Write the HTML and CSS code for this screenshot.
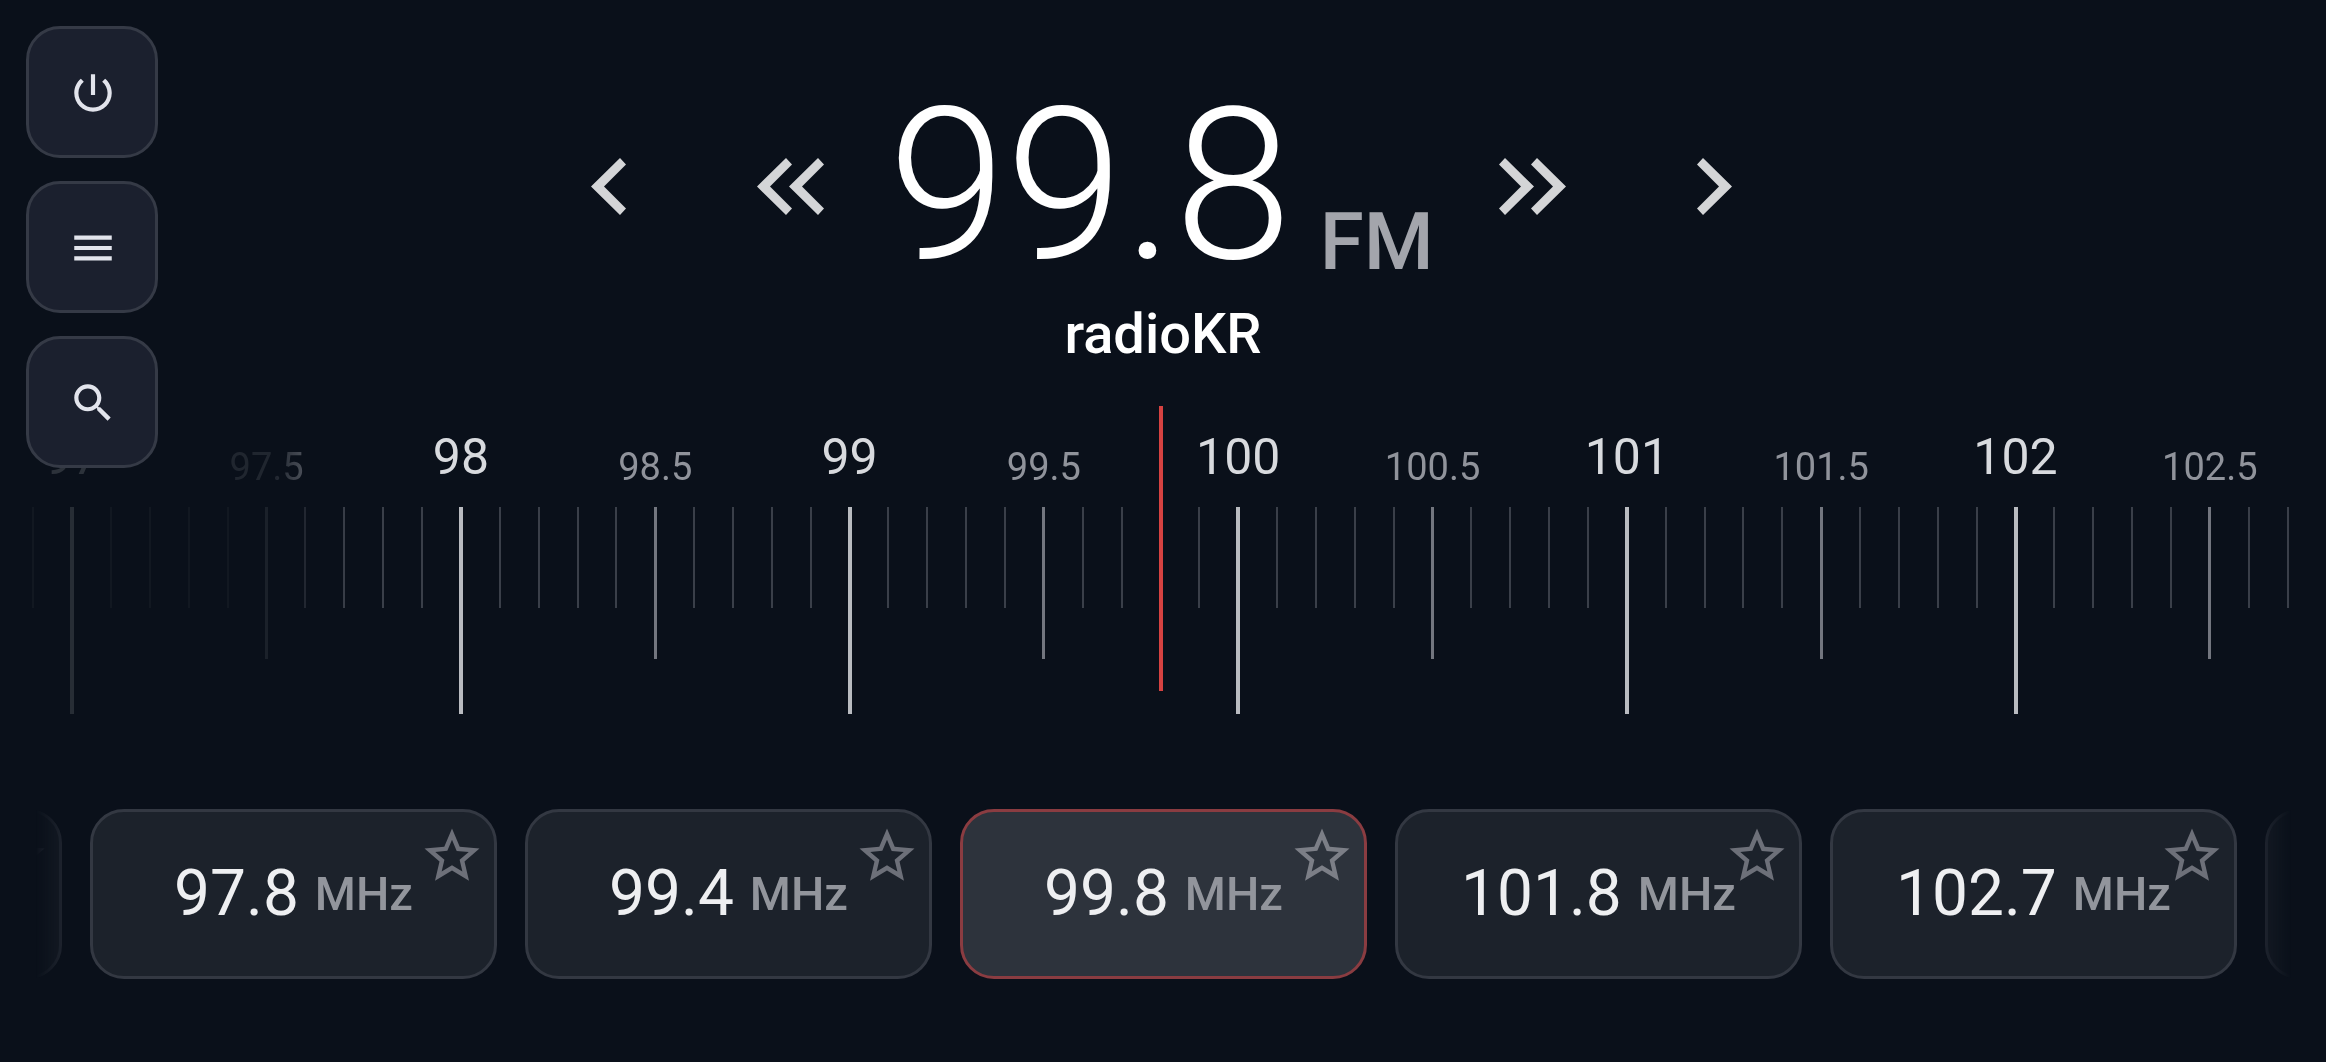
FILE: index.html
```html
<!DOCTYPE html>
<html lang="en">
<head>
<meta charset="utf-8">
<meta name="viewport" content="width=device-width, initial-scale=1">
<title>FM Radio</title>
<link rel="stylesheet" href="styles.css">
</head>
<body>
<nav class="side-nav" aria-label="Radio controls">
  <button class="side-button" type="button" aria-label="Power">
    <svg class="side-icon" viewBox="0 0 24 24"><path d="M13 3h-2v10h2V3zm4.83 2.17-1.42 1.42C17.99 7.86 19 9.81 19 12c0 3.87-3.13 7-7 7s-7-3.13-7-7c0-2.19 1.01-4.14 2.58-5.42L6.17 5.17C4.23 6.82 3 9.26 3 12c0 4.97 4.03 9 9 9s9-4.03 9-9c0-2.74-1.23-5.18-3.17-6.83z"/></svg>
  </button>
  <button class="side-button" type="button" aria-label="Menu">
    <svg class="side-icon" viewBox="0 0 24 24"><path d="M3 18h18v-2H3v2zm0-5h18v-2H3v2zm0-7v2h18V6H3z"/></svg>
  </button>
  <button class="side-button" type="button" aria-label="Search">
    <svg class="side-icon" viewBox="0 0 24 24"><path d="M15.5 14h-.79l-.28-.27C15.41 12.59 16 11.11 16 9.5 16 5.91 13.09 3 9.5 3S3 5.91 3 9.5 5.91 16 9.5 16c1.61 0 3.09-.59 4.23-1.57l.27.28v.79l5 4.99L20.49 19l-4.99-5zm-6 0C7.01 14 5 11.99 5 9.5S7.01 5 9.5 5 14 7.01 14 9.5 11.99 14 9.5 14z"/></svg>
  </button>
</nav>

<main class="radio">
  <section class="tuner" aria-label="Tuner">
    <button class="step" type="button" aria-label="Step down">
      <svg width="35" height="57" viewBox="0 0 35 57"><path d="M29 0l6 6.5-22 22 22 22-6 6.500L0 28.500z"/></svg>
    </button>
    <button class="step" type="button" aria-label="Seek down">
      <svg width="67" height="57" viewBox="0 0 67 57"><path d="M29 0l6 6.500-22 22 22 22-6 6.500L0 28.500zM61 0l6 6.500-22 22 22 22-6 6.500L32 28.500z"/></svg>
    </button>
    <p class="readout"><span class="frequency">99.8</span><span class="band">FM</span></p>
    <button class="step" type="button" aria-label="Seek up">
      <svg width="67" height="57" viewBox="0 0 67 57"><path d="M6 0L0 6.500l22 22-22 22L6 57l29-28.500zM38 0l-6 6.500 22 22-22 22 6 6.500 29-28.500z"/></svg>
    </button>
    <button class="step" type="button" aria-label="Step up">
      <svg width="35" height="57" viewBox="0 0 35 57"><path d="M6 0L0 6.500l22 22-22 22L6 57l29-28.500z"/></svg>
    </button>
  </section>
  <p class="station-name">radioKR</p>

  <section class="dial" aria-label="Frequency dial">
    <ol class="ticks" id="ticks"></ol>
    <input class="needle" type="range" min="96.85" max="102.75" step="0.05" value="99.8" aria-label="Frequency in MHz">
  </section>

  <ul class="presets" aria-label="Presets" id="presets">
    <li class="preset"></li>
    <li class="preset"><button class="preset-button" type="button"><span class="preset-value">97.8</span><span class="preset-unit">MHz</span></button></li>
    <li class="preset"><button class="preset-button" type="button"><span class="preset-value">99.4</span><span class="preset-unit">MHz</span></button></li>
    <li class="preset preset-active"><button class="preset-button" type="button" aria-current="true"><span class="preset-value">99.8</span><span class="preset-unit">MHz</span></button></li>
    <li class="preset"><button class="preset-button" type="button"><span class="preset-value">101.8</span><span class="preset-unit">MHz</span></button></li>
    <li class="preset"><button class="preset-button" type="button"><span class="preset-value">102.7</span><span class="preset-unit">MHz</span></button></li>
    <li class="preset"></li>
  </ul>
</main>
<script src="radio.js"></script>
</body>
</html>
```

FILE: styles.css
```css
* {
  box-sizing: border-box;
}

body {
  margin: 0;
  background: #0a101a;
  color: #fff;
  font-family: Roboto, "Noto Sans", sans-serif;
}

button {
  margin: 0;
  padding: 0;
  border: 0;
  background: none;
  color: inherit;
  font: inherit;
  cursor: pointer;
}

p,
ol,
ul {
  margin: 0;
  padding: 0;
  list-style: none;
}

svg {
  display: block;
  fill: currentColor;
}

/* Floating buttons over the left end of the dial */
.side-nav {
  position: absolute;
  top: 26px;
  left: 26px;
  z-index: 2;
  display: flex;
  flex-direction: column;
  gap: 23px;
}

.side-button {
  display: grid;
  place-items: center;
  width: 132px;
  height: 132px;
  padding: 2px 0 0 2px;
  border: 3px solid #353a46;
  border-radius: 34px;
  background: #1b202e;
  color: #e2e4ec;
}

.side-icon {
  width: 50px;
  height: 50px;
}

.radio {
  padding-top: 78px;
  overflow: hidden;
}

.tuner {
  display: flex;
  align-items: center;
  justify-content: center;
  padding-right: 4px;
}

.step {
  display: grid;
  place-items: center;
  width: 182px;
  height: 120px;
  color: #d4d5d7;
}

.readout {
  display: flex;
  align-items: flex-end;
  justify-content: center;
  gap: 28px;
  min-width: 560px;
}

.frequency {
  font-size: 212px;
  font-weight: 300;
  line-height: 216px;
}

.band {
  margin-bottom: 12px;
  color: #a3a5ac;
  font-size: 80px;
  font-weight: 500;
  line-height: 80px;
}

.station-name {
  margin-top: 8px;
  font-size: 56px;
  font-weight: 500;
  line-height: 64px;
  text-align: center;
}

/* Dial */
.dial {
  position: relative;
  margin: 40px 19px 0 14px;
}

.ticks {
  display: grid;
  grid-auto-flow: column;
  grid-auto-columns: 1fr;
  height: 308px;
  -webkit-mask-image: linear-gradient(to right, rgba(0, 0, 0, 0.17) 262px, #000 334px);
  mask-image: linear-gradient(to right, rgba(0, 0, 0, 0.17) 262px, #000 334px);
}

.tick {
  display: flex;
  flex-direction: column;
  align-items: center;
  min-width: 0;
}

.tick-label {
  display: flex;
  flex: none;
  align-items: flex-end;
  height: 101px;
  padding-bottom: 21px;
  color: #90939b;
  font-size: 38px;
  line-height: 38px;
}

.tick-mark {
  flex: none;
  width: 2px;
  height: 101px;
  background: #3a3f49;
}

.tick-half .tick-mark {
  width: 3px;
  height: 152px;
  background: #73767f;
}

.tick-major .tick-label {
  padding-bottom: 25px;
  color: #d8dade;
  font-size: 50px;
  line-height: 50px;
}

.tick-major .tick-mark {
  width: 4px;
  height: 207px;
  background: #b9bbc0;
}

.needle {
  position: absolute;
  inset: 0 0 auto;
  width: 100%;
  height: 285px;
  margin: 0;
  background: none;
  -webkit-appearance: none;
  appearance: none;
}

.needle::-webkit-slider-thumb {
  width: 4px;
  height: 285px;
  background: #d64241;
  -webkit-appearance: none;
}

/* Presets */
.presets {
  display: flex;
  justify-content: center;
  gap: 28px;
  margin: 95px 35px 0 36px;
  overflow: hidden;
  -webkit-mask-image: linear-gradient(to right, transparent, #000 54px calc(100% - 54px), transparent);
  mask-image: linear-gradient(to right, transparent, #000 54px calc(100% - 54px), transparent);
}

.preset {
  position: relative;
  flex: none;
  width: 407px;
  height: 170px;
  border: 3px solid #333842;
  border-radius: 34px;
  background: #1c222b;
}

.preset-active {
  border-color: #8a3c41;
  background: #2d333c;
}

.preset-button {
  display: flex;
  align-items: center;
  justify-content: center;
  gap: 16px;
  width: 100%;
  height: 100%;
}

.preset-value {
  color: #eeeff1;
  font-size: 64px;
  line-height: 64px;
}

.preset-unit {
  color: #92959c;
  font-size: 47px;
  font-weight: 500;
  line-height: 46px;
}

.favorite {
  position: absolute;
  top: 11px;
  right: 9px;
  color: #6d7079;
}

.preset-active .favorite {
  color: #7c7f87;
}
```

FILE: radio.js
```js
const ticks = document.getElementById("ticks");

// One tick per 0.1 MHz, counted in tenths to keep the values exact
for (let tenth = 969; tenth <= 1027; tenth++) {
  const tick = document.createElement("li");
  const label = document.createElement("span");
  const mark = document.createElement("span");
  tick.className = "tick";
  label.className = "tick-label";
  mark.className = "tick-mark";
  if (tenth % 10 === 0) tick.classList.add("tick-major");
  else if (tenth % 5 === 0) tick.classList.add("tick-half");
  if (tenth % 5 === 0) label.textContent = String(tenth / 10);
  tick.append(label, mark);
  ticks.append(tick);
}

for (const preset of document.querySelectorAll(".preset")) {
  preset.insertAdjacentHTML("beforeend", `
    <button class="favorite" type="button" aria-label="Add to favorites">
      <svg width="66" height="66" viewBox="0 0 24 24"><path d="M22 9.240l-7.190-.620L12 2 9.190 8.630 2 9.240l5.460 4.730L5.820 21 12 17.270 18.180 21l-1.630-7.030L22 9.240zM12 15.400l-3.760 2.270 1-4.280-3.320-2.880 4.380-.380L12 6.100l1.710 4.040 4.380.380-3.320 2.880 1 4.280L12 15.400z"/></svg>
    </button>`);
}
```
